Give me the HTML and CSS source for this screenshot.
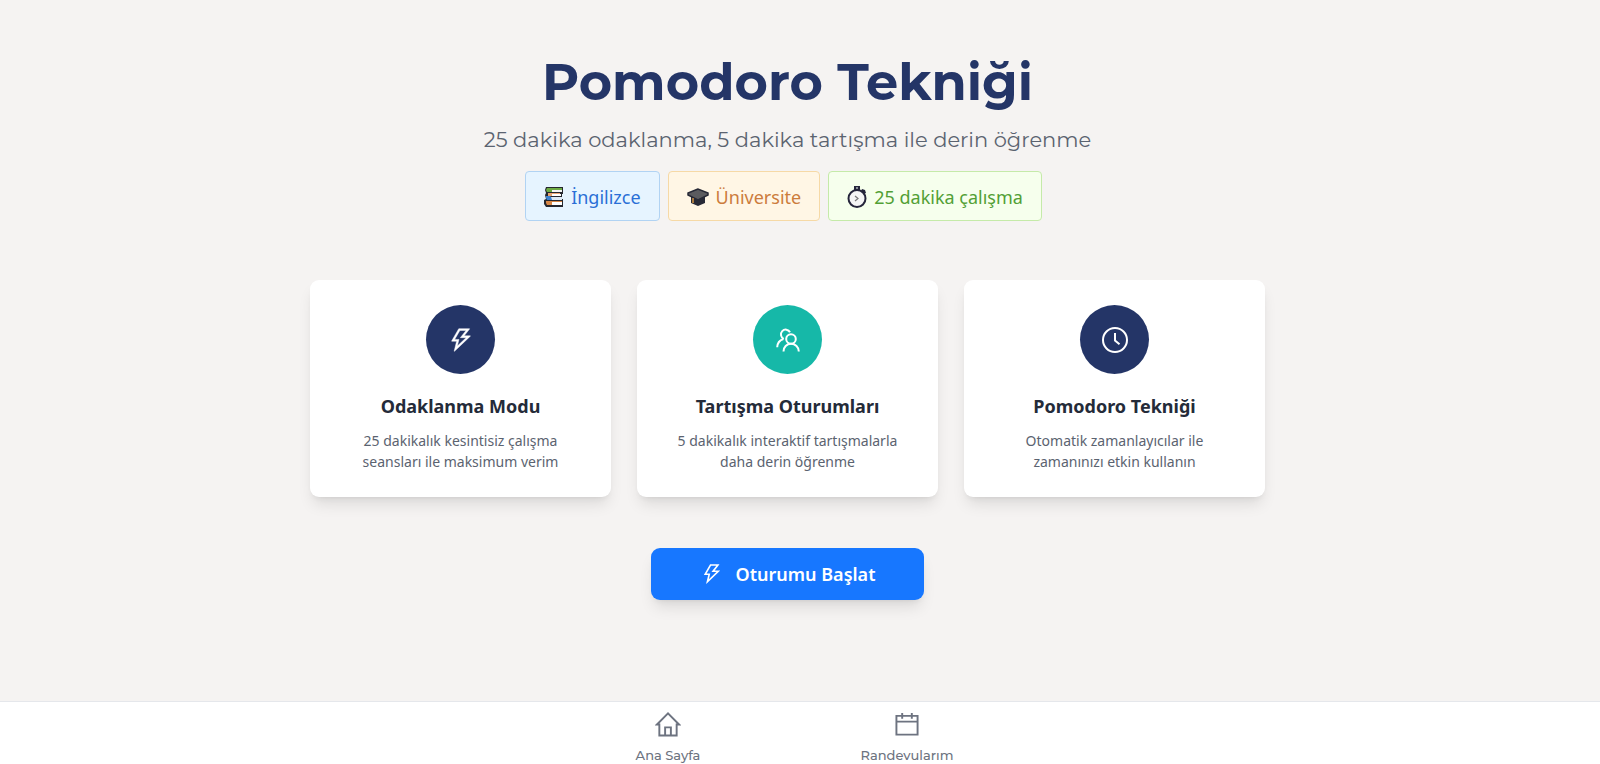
FILE: index.html
```html
<!DOCTYPE html>
<html lang="tr">
<head>
<meta charset="utf-8">
<meta name="viewport" content="width=device-width, initial-scale=1">
<title>Pomodoro Tekniği</title>
<link rel="stylesheet" href="styles.css">
</head>
<body>
<svg class="sprite" aria-hidden="true">
  <symbol id="bolt" viewBox="0 0 1024 1024"><path d="M848 359.300H627.700L825.800 109c4.100-5.300.4-13-6.300-13H436c-2.800 0-5.500 1.500-6.900 4L170 547.500c-3.100 5.300.7 12 6.900 12h174.400l-89.400 357.600c-1.900 7.800 7.500 13.300 13.300 7.700L853.500 373c5.200-4.900 1.700-13.700-5.500-13.700zM378.200 732.500l60.300-241H281.100l189.600-327.400h224.600L487 427.400h211L378.200 732.500z"/></symbol>
</svg>
<main class="page">
  <header class="hero">
    <h1 class="title">Pomodoro Tekniği</h1>
    <p class="subtitle">25 dakika odaklanma, 5 dakika tartışma ile derin öğrenme</p>
    <div class="tags">
      <span class="tag tag-blue">
        <svg class="emoji" viewBox="0 0 20 20" aria-hidden="true"><path d="M2 0h17v7h-1v5h1v8H2l-2-3v-4l2-1-1-4 1-2-1-3z" fill="#25272f"/><path d="M3 1h15v2H8v2H3L2 3z" fill="#6dab43"/><path d="M8 3h10v2H8z" fill="#f4f5f5"/><path d="M4 6h12v1H8v2H4z" fill="#e7a472"/><path d="M8 7h9v2H8z" fill="#fff"/><path d="M2 9h4l2 2v2H3l-1-2z" fill="#3d82d1"/><path d="M7 10h11v3H8z" fill="#dce9f5"/><path d="M2 14h16v1H8v3H3l-1-2z" fill="#d78747"/><path d="M8 15h10v3H8z" fill="#fff"/></svg>
        İngilizce
      </span>
      <span class="tag tag-orange">
        <svg class="emoji emoji-wide" viewBox="0 0 22 20" aria-hidden="true"><path d="M4 9v7l7 3 7-3V9z" fill="#272936"/><path d="M11 2 1 6v2l10 5 10-5V6z" fill="#5b5b5f" stroke="#272936" stroke-width="1.500"/><path d="M6 11v5" stroke="#d49343" stroke-width="1.500"/></svg>
        Üniversite
      </span>
      <span class="tag tag-green">
        <svg class="emoji emoji-watch" viewBox="0 0 20 22" aria-hidden="true"><path d="M7 0h6v4H7zM15 3l3 1 1 3-2 1-3-3z" fill="#25253b"/><path d="M9 1h2v2H9z" fill="#8b8d99"/><circle cx="10" cy="12.500" r="8.500" fill="#f5f5f5" stroke="#25253b" stroke-width="2"/><path d="m8 10 3 2.500L8 15" fill="none" stroke="#777" stroke-width="1.200"/></svg>
        25 dakika çalışma
      </span>
    </div>
  </header>

  <section class="cards">
    <article class="card">
      <div class="badge"><svg class="icon bolt" viewBox="0 0 1024 1024" aria-hidden="true"><use href="#bolt"/></svg></div>
      <h2 class="card-title">Odaklanma Modu</h2>
      <p class="card-text">25 dakikalık kesintisiz çalışma seansları ile maksimum verim</p>
    </article>
    <article class="card">
      <div class="badge badge-teal"><svg class="icon line" viewBox="0 0 26 26" aria-hidden="true"><circle cx="16" cy="12" r="4.800"/><path d="M8.500 24.500c0-4.500 3.200-7.700 7.500-7.700s7.800 3.200 7.800 7.700M15 5.200a4.800 4.800 0 1 0-6.200 6.600M2.200 20.200c.2-4 2.600-7 6.200-8.200"/></svg></div>
      <h2 class="card-title">Tartışma Oturumları</h2>
      <p class="card-text">5 dakikalık interaktif tartışmalarla daha derin öğrenme</p>
    </article>
    <article class="card">
      <div class="badge"><svg class="icon line" viewBox="0 0 26 26" aria-hidden="true"><circle cx="13" cy="13" r="12"/><path d="M13 6v7.500l4.500 3.700"/></svg></div>
      <h2 class="card-title">Pomodoro Tekniği</h2>
      <p class="card-text">Otomatik zamanlayıcılar ile zamanınızı etkin kullanın</p>
    </article>
  </section>

  <button class="start" type="button">
    <svg class="start-icon" viewBox="0 0 1024 1024" aria-hidden="true"><use href="#bolt"/></svg>
    Oturumu Başlat
  </button>
</main>

<nav class="nav">
  <a class="nav-link" href="#home">
    <svg class="nav-icon" viewBox="0 0 26 26" aria-hidden="true"><path d="M4 13v11.500h18V13h2.500L13 1.500 1.500 13z"/><path d="M10 24v-8h6v8"/></svg>
    <span>Ana Sayfa</span>
  </a>
  <a class="nav-link" href="#appointments">
    <svg class="nav-icon" viewBox="0 0 26 26" aria-hidden="true"><path d="M2 4h22v19.500H2zM2 10h22M8 1v6M18 1v6"/></svg>
    <span>Randevularım</span>
  </a>
</nav>
</body>
</html>
```
FILE: styles.css
```css
* { box-sizing: border-box; }

body {
  margin: 0;
  min-height: 100vh;
  display: flex;
  flex-direction: column;
  background: #f5f3f2;
  font-family: "Segoe UI", "Noto Sans", sans-serif;
}

h1, h2, p { margin: 0; }

.sprite { position: absolute; width: 0; height: 0; }

.page {
  flex: 1;
  display: flex;
  flex-direction: column;
  align-items: center;
  padding: 50px 25px 50px 0;
}

.hero { text-align: center; }

.title {
  font: 700 51px/64px Montserrat, Inter, sans-serif;
  color: #243567;
}

.subtitle {
  margin-top: 9px;
  font: 400 21px/34px Montserrat, Inter, sans-serif;
  color: #5b6370;
}

.tags {
  display: flex;
  justify-content: center;
  gap: 8px;
  margin-top: 14px;
  padding-right: 8px;
}

.tag {
  display: flex;
  align-items: center;
  gap: 7px;
  height: 50px;
  padding: 1px 18px 0;
  border: 1px solid;
  border-radius: 4px;
  font-size: 18px;
}

.tag-blue { color: #2a6fd6; background: #e6f4ff; border-color: #b1d3f3; }
.tag-orange { color: #cc7c3c; background: #fff6e5; border-color: #f6d9a6; }
.tag-green { color: #529f35; background: #f6ffed; border-color: #c5eaa9; }

.emoji { width: 20px; height: 20px; }
.emoji-wide { width: 22px; }
.emoji-watch { height: 22px; }

.cards {
  display: grid;
  grid-template-columns: repeat(3, 1fr);
  gap: 26px;
  width: 100%;
  max-width: 955px;
  margin-top: 59px;
}

.card {
  display: flex;
  flex-direction: column;
  align-items: center;
  padding: 25px 36px;
  border-radius: 9px;
  background: #fff;
  box-shadow: 0 10px 15px -3px rgba(0, 0, 0, .1), 0 4px 6px -4px rgba(0, 0, 0, .1);
  text-align: center;
}

.badge {
  display: grid;
  place-items: center;
  width: 69px;
  height: 69px;
  border-radius: 50%;
  background: #243567;
  color: #fff;
}

.badge-teal { background: #16b8a8; }

.icon { width: 26px; height: 26px; fill: currentColor; }
.bolt { width: 28px; height: 28px; stroke: currentColor; stroke-width: 16; }
.line { fill: none; stroke: currentColor; stroke-width: 2; }

.card-title {
  margin-top: 17px;
  font-size: 18px;
  line-height: 30px;
  font-weight: 700;
  color: #242b39;
}

.card-text {
  margin-top: 9px;
  font-size: 14px;
  line-height: 21px;
  color: #5b6370;
}

.start {
  display: flex;
  align-items: center;
  justify-content: center;
  gap: 12px;
  height: 52px;
  margin-top: 51px;
  padding: 0 49px;
  border: 0;
  border-radius: 9px;
  background: #1777ff;
  color: #fff;
  box-shadow: 0 10px 15px -3px rgba(0, 0, 0, .1), 0 4px 6px -4px rgba(0, 0, 0, .1);
  font: 600 18px/28px "Segoe UI", "Noto Sans", sans-serif;
}

.start-icon { width: 24px; height: 24px; fill: currentColor; }

.nav {
  display: flex;
  justify-content: center;
  height: 63px;
  padding-right: 25px;
  border-top: 1px solid #e5e7eb;
  background: #fff;
}

.nav-link {
  display: flex;
  flex-direction: column;
  align-items: center;
  gap: 9px;
  width: 239px;
  padding-top: 10px;
  color: #6d7380;
  font: 500 13px/18px Montserrat, Inter, sans-serif;
  text-decoration: none;
}

.nav-icon { width: 26px; height: 26px; fill: none; stroke: currentColor; stroke-width: 2; }
```
